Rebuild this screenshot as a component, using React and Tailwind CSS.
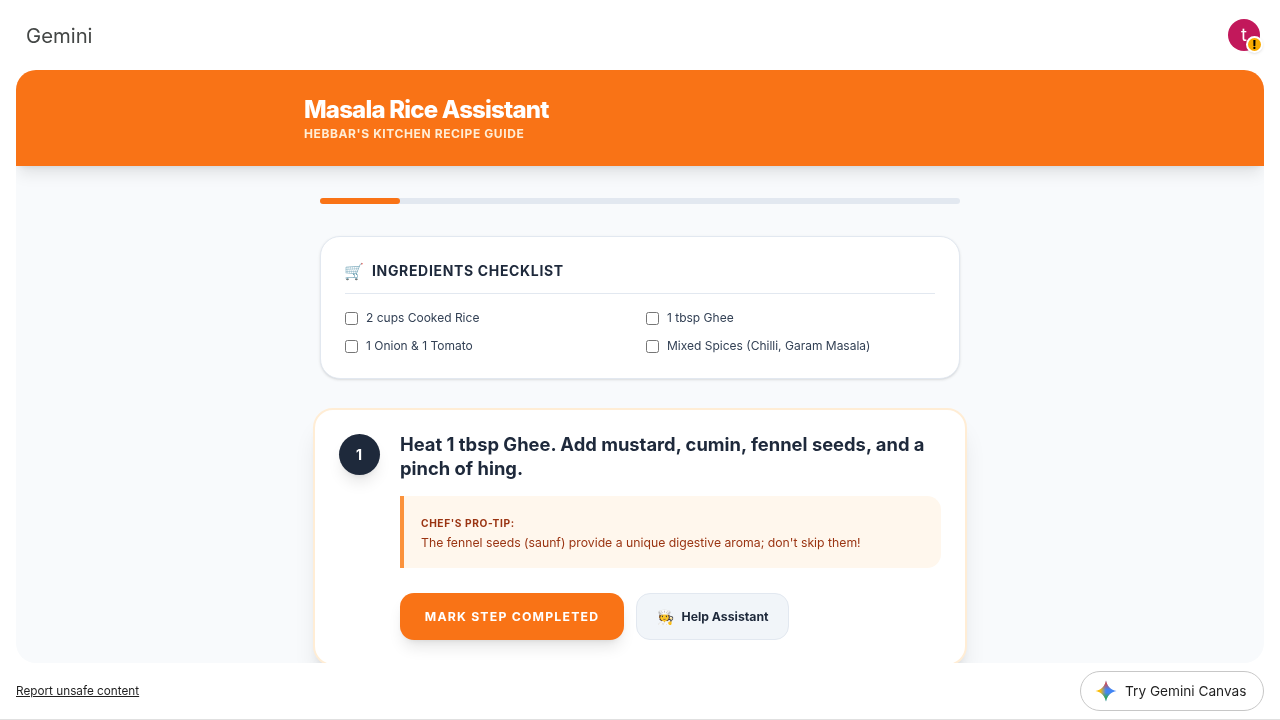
const ingredients = [
  '2 cups Cooked Rice',
  '1 tbsp Ghee',
  '1 Onion & 1 Tomato',
  'Mixed Spices (Chilli, Garam Masala)',
];

const sparkPath = 'M12 1.5C12.8 7 17 11.2 22.5 12C17 12.8 12.8 17 12 22.5C11.2 17 7 12.8 1.5 12C7 11.2 11.2 7 12 1.5Z';

function Spark() {
  return (
    <svg width="24" height="24" viewBox="0 0 24 24">
      <defs>
        <linearGradient id="spark-h" x1="0" y1="0" x2="1" y2="0">
          <stop offset="0.22" stopColor="#fbbc04" />
          <stop offset="0.5" stopColor="#4285f4" />
        </linearGradient>
        <linearGradient id="spark-top" x1="0" y1="0" x2="0" y2="1">
          <stop offset="0.1" stopColor="#ea4335" />
          <stop offset="0.42" stopColor="#ea4335" stopOpacity="0" />
        </linearGradient>
        <linearGradient id="spark-bottom" x1="0" y1="0" x2="0" y2="1">
          <stop offset="0.58" stopColor="#34a853" stopOpacity="0" />
          <stop offset="0.82" stopColor="#34a853" />
        </linearGradient>
      </defs>
      <path d={sparkPath} fill="url(#spark-h)" />
      <path d={sparkPath} fill="url(#spark-top)" />
      <path d={sparkPath} fill="url(#spark-bottom)" />
    </svg>
  );
}

export default function App() {
  return (
    <div className="h-[720px] w-[1280px] overflow-hidden will-change-transform font-['Inter',sans-serif] flex flex-col">
      {/* Top bar */}
      <div className="h-[70px] shrink-0 flex items-center justify-between pl-[26px] pr-5 pt-0.5">
        <span className="text-[20.3px] text-[#444746]">Gemini</span>
        <div className="relative -mt-0.5 w-8 h-8 rounded-full bg-[#c2185b] flex items-center justify-center text-white text-lg">
          t
          <div className="absolute -right-[3px] -bottom-[2px] w-[17px] h-[17px] rounded-full bg-[#f9ab00] border-2 border-white shadow flex items-center justify-center text-xs font-extrabold text-black leading-none">
            !
          </div>
        </div>
      </div>

      {/* Panel */}
      <div className="h-[593px] shrink-0 mx-4 rounded-[20px] overflow-hidden bg-[#f8fafc] flex flex-col">
        <header className="h-24 shrink-0 bg-[#f97316] pl-[288px] pt-[25px] shadow-[0_10px_15px_-3px_rgba(0,0,0,0.1),0_4px_6px_-4px_rgba(0,0,0,0.1)] relative">
          <h1 className="text-2xl leading-[30px] font-extrabold text-white tracking-[-0.8px]">Masala Rice Assistant</h1>
          <p className="text-xs leading-4 mt-px font-bold text-[#ffedd5] tracking-[0.6px] uppercase">Hebbar's Kitchen Recipe Guide</p>
        </header>

        <div className="w-[640px] ml-[304px] pt-8">
          <div className="h-1.5 rounded-full bg-[#e2e8f0]">
            <div className="h-1.5 w-20 rounded-full bg-[#f97316]" />
          </div>

          {/* Ingredients */}
          <div className="mt-8 h-[143px] rounded-[20px] border border-[#e2e8f0] bg-white px-6 pt-[18px] shadow-sm">
            <div className="flex items-center gap-2 border-b border-[#e2e8f0] h-[39px] pb-[6px]">
              <span className="text-[16px] w-5 -ml-px">🛒</span>
              <h2 className="text-sm font-bold text-[#1e293b] tracking-[0.66px] uppercase">Ingredients Checklist</h2>
            </div>
            <div className="grid grid-cols-2 gap-x-3 gap-y-2 mt-3.5">
              {ingredients.map((item) => (
                <label key={item} className="flex items-center gap-2 h-5 text-xs text-[#334155]">
                  <input type="checkbox" className="w-[13px] h-[13px] appearance-none rounded-[2.5px] border border-[#767676] bg-white" />
                  <span>{item}</span>
                </label>
              ))}
            </div>
          </div>
        </div>

        {/* Step card */}
        <div className="w-[654px] ml-[296.5px] mt-[29px] h-[258px] shrink-0 rounded-[20px] border-2 border-[#ffedd5] bg-white pl-6 pr-6 pt-6 flex gap-[20.5px] shadow-xl">
          <div className="w-[41px] h-[41px] shrink-0 rounded-full bg-[#1e293b] text-white text-sm font-bold flex items-center justify-center shadow-lg">1</div>
          <div className="flex-1">
            <h3 className="text-[18.36px] leading-6 font-bold text-[#1e293b] -mt-[2px]">
              Heat 1 tbsp Ghee. Add mustard, cumin, fennel seeds, and a pinch of hing.
            </h3>
            <div className="mt-4 h-[72px] rounded-r-[14px] border-l-4 border-[#fb923c] bg-[#fff7ed] pl-[17px] pt-[21px]">
              <p className="text-[10.2px] leading-3 font-bold text-[#9a3412] tracking-[0.6px] uppercase">Chef's Pro-Tip:</p>
              <p className="text-[12.24px] leading-4 mt-[6px] text-[#9a3412]">The fennel seeds (saunf) provide a unique digestive aroma; don't skip them!</p>
            </div>
            <div className="flex gap-3 mt-[25px]">
              <button className="w-[224px] h-[47px] pt-px rounded-[14px] bg-[#f97316] text-white text-[12.24px] font-bold tracking-[1.22px] uppercase shadow-lg">Mark Step Completed</button>
              <button className="w-[153px] h-[47px] pt-px rounded-[14px] border border-[#e2e8f0] bg-[#f1f5f9] text-[12.24px] font-bold text-[#1e293b] flex items-center justify-center gap-2">
                <span className="text-sm">🧑‍🍳</span>
                Help Assistant
              </button>
            </div>
          </div>
        </div>
      </div>

      {/* Footer */}
      <div className="h-[57px] shrink-0 border-b border-[#e0e0e0] flex items-center justify-between px-4">
        <a className="text-[11.75px] mt-px text-[#1f1f1f] underline">Report unsafe content</a>
        <button className="w-[184px] h-10 rounded-full border border-[#c7c7c7] bg-white flex items-center gap-[7px] pl-[13px] text-[13.65px] text-[#1f1f1f]">
          <Spark />
          Try Gemini Canvas
        </button>
      </div>
    </div>
  );
}
